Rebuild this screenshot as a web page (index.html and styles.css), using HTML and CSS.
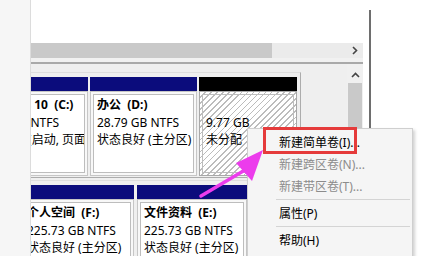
FILE: index.html
```html
<!DOCTYPE html>
<html lang="zh-CN">
<head>
<meta charset="utf-8">
<title>磁盘管理</title>
<link rel="stylesheet" href="styles.css">
</head>
<body>
<div class="window">
  <div class="leftbar"></div>
  <div class="main">
    <div class="upper"></div>
    <div class="hscroll">
      <div class="hthumb"></div>
      <svg class="harrow" width="6" height="9" viewBox="0 0 6 9"><path d="M1 1 L4.5 4.5 L1 8" fill="none" stroke="#444" stroke-width="1.6"/></svg>
    </div>
    <div class="hgap"></div>
    <div class="splitter"></div>
    <div class="diskpane">
      <div class="diskview">
        <div class="disks">
          <div class="row">
            <div class="part w-c">
              <div class="bar"></div>
              <div class="body"><div class="inner">
                <div class="name">Windows 10&nbsp;&nbsp;(C:)</div>
                <div>59.45 GB NTFS</div>
                <div>状态良好 (启动, 页面文件, 故障转储, 主分区)</div>
              </div></div>
            </div>
            <div class="part w-d">
              <div class="bar"></div>
              <div class="body"><div class="inner">
                <div class="name">办公&nbsp;&nbsp;(D:)</div>
                <div>28.79 GB NTFS</div>
                <div>状态良好 (主分区)</div>
              </div></div>
            </div>
            <div class="part w-u">
              <div class="bar black"></div>
              <div class="body hatch"><div class="inner hatch">
                <div>&nbsp;</div>
                <div>9.77 GB</div>
                <div>未分配</div>
              </div></div>
            </div>
          </div>
          <div class="row row2">
            <div class="part w-p">
              <div class="bar"></div>
              <div class="body"><div class="inner">
                <div class="name">系统保留</div>
                <div>500 MB NTFS</div>
                <div>状态良好 (系统)</div>
              </div></div>
            </div>
            <div class="part w-f">
              <div class="bar"></div>
              <div class="body"><div class="inner">
                <div class="name">个人空间&nbsp;&nbsp;(F:)</div>
                <div>225.73 GB NTFS</div>
                <div>状态良好 (主分区)</div>
              </div></div>
            </div>
            <div class="part w-e">
              <div class="bar"></div>
              <div class="body"><div class="inner">
                <div class="name">文件资料&nbsp;&nbsp;(E:)</div>
                <div>225.73 GB NTFS</div>
                <div>状态良好 (主分区)</div>
              </div></div>
            </div>
          </div>
        </div>
      </div>
      <div class="vscroll">
        <svg class="varrow" width="9" height="6" viewBox="0 0 9 6"><path d="M1 5 L4.5 1.5 L8 5" fill="none" stroke="#444" stroke-width="1.6"/></svg>
        <div class="vthumb"></div>
      </div>
    </div>
  </div>
  <div class="rightpane"><div class="vline"></div></div>
</div>

<div class="menu">
  <div class="item">新建简单卷(I)...</div>
  <div class="item disabled">新建跨区卷(N)...</div>
  <div class="item disabled">新建带区卷(T)...</div>
  <div class="sep"></div>
  <div class="item">属性(P)</div>
  <div class="sep"></div>
  <div class="item">帮助(H)</div>
</div>
<div class="redbox"></div>
<svg class="arrow" width="440" height="256" viewBox="0 0 440 256">
  <line x1="201" y1="196" x2="245" y2="170" stroke="#ec3cec" stroke-width="3.5" stroke-linecap="round"/>
  <polygon points="263,150 236,163 252,181" fill="#ec3cec"/>
</svg>
</body>
</html>
```
FILE: styles.css
```css
* { box-sizing: border-box; margin: 0; padding: 0; }
body {
  width: 440px; height: 256px; overflow: hidden; position: relative;
  background: #fff; color: #000;
  font-family: "Noto Sans", "Noto Sans CJK SC", sans-serif; font-size: 12px;
}
.window { display: flex; height: 256px; }
.leftbar { width: 31px; flex: none; background: #f6f6f6; border-right: 1px solid #dcdcdc; }
.main { width: 332px; flex: none; display: flex; flex-direction: column; }
.upper { height: 43px; background: #fff; }
.hscroll { height: 15px; background: #ebebeb; display: flex; align-items: center; }
.hthumb { width: 241px; height: 15px; background: #c9c9c9; }
.harrow { margin-left: auto; margin-right: 5px; }
.hgap { height: 4px; background: #f1f1f1; }
.splitter { height: 2px; background: #a9a9a9; }
.diskpane { flex: 1; min-height: 0; display: flex; background: #efefef; }
.diskview { flex: 1; overflow: hidden; padding-top: 8px; }
.disks { margin-left: -61px; }
.row {
  display: flex; gap: 2px; width: max-content;
  padding: 4px 3px 1px 0; margin-bottom: 2px;
  border-top: 1px solid #dedede; border-right: 1px solid #acacac; border-bottom: 1px solid #acacac;
}
.row2 { gap: 3px; }
.part { display: flex; flex-direction: column; flex: none; }
.w-c { width: 118px; }
.w-d { width: 107px; }
.w-u { width: 98px; }
.w-p { width: 47px; }
.w-f { width: 114px; }
.w-e { width: 110px; }
.bar { height: 14px; background: #0b0c7c; }
.bar.black { background: #000; }
.body { height: 85px; border: 1px solid #c6c6c6; background: #f8f8f8; padding: 2px; }
.inner {
  height: 100%; border: 1px solid #bdbdbd; background: #fff;
  padding: 1px 3px; line-height: 17.5px; white-space: nowrap; overflow: hidden;
}
.name { font-weight: bold; }
.hatch {
  background: repeating-linear-gradient(135deg, #ffffff 0 3.2px, #bcbcbc 3.2px 4.3px);
}
.body.hatch { border-color: #a8a8a8; }
.vscroll { width: 16px; flex: none; background: #f0f0f0; display: flex; flex-direction: column; align-items: center; }
.varrow { margin-top: 8px; flex: none; }
.vthumb { width: 14px; height: 200px; margin-top: 5px; background: #c9c9c9; flex: none; }
.rightpane { flex: 1; display: flex; background: #fff; }
.vline { width: 2px; margin-left: 6px; margin-top: 10px; background: #6e6e6e; }

.menu {
  position: absolute; left: 247px; top: 128px; width: 166px; height: 140px;
  background: #f5f5f5; border: 1px solid #cfcfcf; padding: 3px 0;
  box-shadow: 2px 2px 3px rgba(0,0,0,0.18);
}
.item { height: 22px; line-height: 22px; padding-left: 31px; white-space: nowrap; color: #000; }
.item.disabled { color: #8c8c8c; }
.sep { height: 1px; background: #d4d4d4; margin: 1px 2px 3px 28px; }
.redbox {
  position: absolute; left: 263px; top: 127px; width: 94px; height: 27px;
  border: 3px solid #e53b3b;
}
.arrow { position: absolute; left: 0; top: 0; pointer-events: none; }
```
